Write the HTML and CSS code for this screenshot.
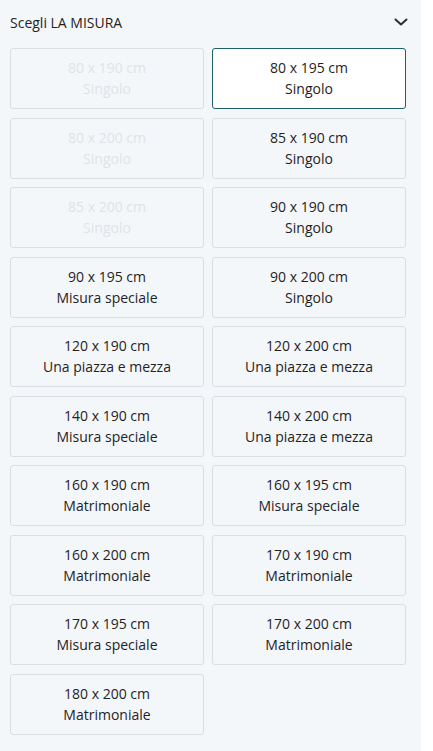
FILE: index.html
```html
<!DOCTYPE html>
<html lang="it">
  <head>
    <meta charset="UTF-8" />
    <meta name="viewport" content="width=device-width, initial-scale=1.0" />
    <title>Scegli la misura</title>
    <link rel="stylesheet" href="styles.css">
  </head>
  <body>
    <div class="size-panel">
      <div class="panel-head">
        <span class="panel-title">Scegli LA MISURA</span>
        <svg class="chevron" width="14" height="8" viewBox="0 0 14 8">
          <path d="M1.5 1.5 L7 6.5 L12.5 1.5" fill="none" stroke="#2b2f33" stroke-width="2" stroke-linecap="round" stroke-linejoin="round"/>
        </svg>
      </div>

      <div class="size-grid">
        <button class="size-btn disabled">80 x 190 cm<br>Singolo</button>
        <button class="size-btn selected">80 x 195 cm<br>Singolo</button>
        <button class="size-btn disabled">80 x 200 cm<br>Singolo</button>
        <button class="size-btn">85 x 190 cm<br>Singolo</button>
        <button class="size-btn disabled">85 x 200 cm<br>Singolo</button>
        <button class="size-btn">90 x 190 cm<br>Singolo</button>
        <button class="size-btn">90 x 195 cm<br>Misura speciale</button>
        <button class="size-btn">90 x 200 cm<br>Singolo</button>
        <button class="size-btn">120 x 190 cm<br>Una piazza e mezza</button>
        <button class="size-btn">120 x 200 cm<br>Una piazza e mezza</button>
        <button class="size-btn">140 x 190 cm<br>Misura speciale</button>
        <button class="size-btn">140 x 200 cm<br>Una piazza e mezza</button>
        <button class="size-btn">160 x 190 cm<br>Matrimoniale</button>
        <button class="size-btn">160 x 195 cm<br>Misura speciale</button>
        <button class="size-btn">160 x 200 cm<br>Matrimoniale</button>
        <button class="size-btn">170 x 190 cm<br>Matrimoniale</button>
        <button class="size-btn">170 x 195 cm<br>Misura speciale</button>
        <button class="size-btn">170 x 200 cm<br>Matrimoniale</button>
        <button class="size-btn">180 x 200 cm<br>Matrimoniale</button>
      </div>
    </div>
  </body>
</html>
```

FILE: styles.css
```css
/* Global */
body {
  margin: 0;
  padding: 0;
  background-color: #fff;
  font-family: "Open Sans", "Noto Sans", sans-serif;
  color: #1f2326;
}

/* Panel */
.size-panel {
  width: 421px;
  min-height: 751px;
  box-sizing: border-box;
  background-color: #f4f7fa;
  padding: 8px 15px 16px 10px;
}

.panel-head {
  display: flex;
  justify-content: space-between;
  align-items: center;
  height: 28px;
  margin-bottom: 12px;
}

.panel-title {
  font-size: 14px;
  font-weight: 500;
}

.chevron {
  margin-right: -2px;
}

/* Grid of sizes */
.size-grid {
  display: grid;
  grid-template-columns: 1fr 1fr;
  column-gap: 8px;
  row-gap: 8.5px;
}

.size-btn {
  height: 61px;
  padding: 0 0 1px;
  border: 1px solid #dadee3;
  border-radius: 3px;
  background-color: #f4f7fa;
  font-family: inherit;
  font-size: 14px;
  font-weight: 500;
  line-height: 21px;
  color: #1f2326;
  text-align: center;
  cursor: pointer;
}

.size-btn.selected {
  background-color: #fff;
  border-color: #1e5f6c;
}

.size-btn.disabled {
  color: #dfe3e7;
  cursor: default;
}
```
